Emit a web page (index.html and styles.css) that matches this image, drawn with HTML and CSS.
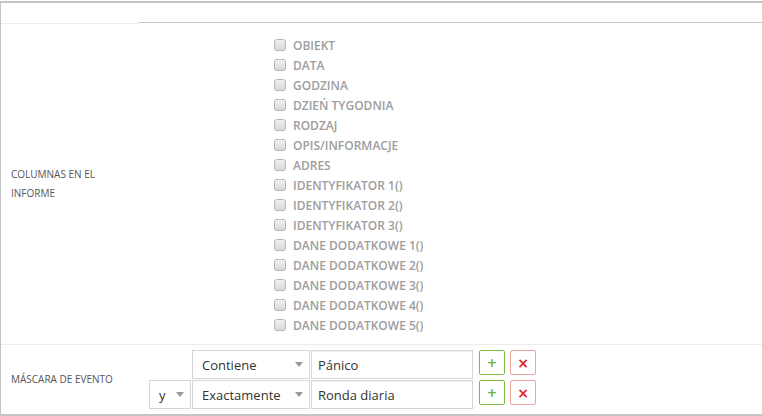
FILE: index.html
```html
<!DOCTYPE html>
<html>
<head>
<meta charset="utf-8">
<link rel="stylesheet" href="styles.css">
</head>
<body>
<div class="form">
  <div class="row row-head">
    <div class="cell-label head-label"></div>
    <div class="cell-value head-value"></div>
  </div>
  <div class="row row-columns">
    <div class="cell-label">COLUMNAS EN EL INFORME</div>
    <div class="cell-value">
      <ul class="checks">
        <li><label><input type="checkbox"><span>OBIEKT</span></label></li>
        <li><label><input type="checkbox"><span>DATA</span></label></li>
        <li><label><input type="checkbox"><span>GODZINA</span></label></li>
        <li><label><input type="checkbox"><span>DZIEŃ TYGODNIA</span></label></li>
        <li><label><input type="checkbox"><span>RODZAJ</span></label></li>
        <li><label><input type="checkbox"><span>OPIS/INFORMACJE</span></label></li>
        <li><label><input type="checkbox"><span>ADRES</span></label></li>
        <li><label><input type="checkbox"><span>IDENTYFIKATOR 1()</span></label></li>
        <li><label><input type="checkbox"><span>IDENTYFIKATOR 2()</span></label></li>
        <li><label><input type="checkbox"><span>IDENTYFIKATOR 3()</span></label></li>
        <li><label><input type="checkbox"><span>DANE DODATKOWE 1()</span></label></li>
        <li><label><input type="checkbox"><span>DANE DODATKOWE 2()</span></label></li>
        <li><label><input type="checkbox"><span>DANE DODATKOWE 3()</span></label></li>
        <li><label><input type="checkbox"><span>DANE DODATKOWE 4()</span></label></li>
        <li><label><input type="checkbox"><span>DANE DODATKOWE 5()</span></label></li>
      </ul>
    </div>
  </div>
  <div class="row row-mask">
    <div class="cell-label">MÁSCARA DE EVENTO</div>
    <div class="cell-value">
      <div class="mask-lines">
        <div class="mask-line">
          <div class="spacer"></div>
          <div class="select sel-op"><span>Contiene</span><i class="caret"></i></div>
          <div class="text-input">Pánico</div>
          <button class="btn btn-add">+</button>
          <button class="btn btn-del">×</button>
        </div>
        <div class="mask-line">
          <div class="select sel-join"><span>y</span><i class="caret"></i></div>
          <div class="select sel-op"><span>Exactamente</span><i class="caret"></i></div>
          <div class="text-input">Ronda diaria</div>
          <button class="btn btn-add">+</button>
          <button class="btn btn-del">×</button>
        </div>
      </div>
    </div>
  </div>
</div>
</body>
</html>
```
FILE: styles.css
```css
html, body {
  margin: 0;
  padding: 0;
  background: #fff;
  font-family: "Open Sans", "Liberation Sans", sans-serif;
}
.form {
  margin-top: 1px;
  border-top: 2px solid #c4c4c4;
  border-bottom: 2px solid #c4c4c4;
  border-left: 1px solid #c4c4c4;
}
.row {
  display: flex;
}
.cell-label {
  width: 128px;
  flex: none;
  padding-left: 10px;
  font-size: 10px;
  line-height: 19px;
  color: #555;
}
.cell-value {
  flex: 1;
}
.row-head {
  align-items: flex-start;
}
.head-label {
  height: 20px;
  border-bottom: 1px solid #ececec;
}
.head-value {
  height: 19px;
  border-bottom: 1px solid #c6c6c6;
}
.row-columns {
  align-items: center;
  border-bottom: 1px solid #ececec;
}
.checks {
  list-style: none;
  margin: 0;
  padding: 11px 0 9px 135px;
}
.checks li {
  height: 20px;
  display: flex;
  align-items: center;
}
.checks label {
  display: flex;
  align-items: center;
  font-size: 12px;
  font-weight: 600;
  color: #9d9d9d;
}
.checks input {
  appearance: none;
  -webkit-appearance: none;
  width: 12px;
  height: 12px;
  margin: 0 7px 0 0;
  border: 1px solid #b5b5b5;
  border-radius: 3px;
  background: linear-gradient(#f2f2f2, #d8d8d8);
  box-sizing: border-box;
}
.row-mask {
  align-items: center;
}
.mask-lines {
  padding: 5px 0 5px 10px;
  display: flex;
  flex-direction: column;
  gap: 1px;
}
.mask-line {
  display: flex;
  align-items: flex-start;
  gap: 1px;
}
.spacer, .sel-join {
  width: 42px;
  flex: none;
}
.select, .text-input {
  height: 29px;
  box-sizing: border-box;
  border: 1px solid #d6d6d6;
  font-size: 13px;
  color: #333;
  display: flex;
  align-items: center;
}
.select {
  justify-content: space-between;
  padding: 0 6px 0 9px;
}
.sel-op {
  width: 118px;
}
.text-input {
  width: 162px;
  padding-left: 6px;
  box-shadow: inset 0 1px 1px rgba(0,0,0,0.06);
}
.caret {
  width: 0;
  height: 0;
  border-left: 4px solid transparent;
  border-right: 4px solid transparent;
  border-top: 5px solid #999;
}
.btn {
  width: 26px;
  height: 25px;
  margin-left: 4px;
  padding: 0;
  background: #fff;
  border-radius: 2px;
  font-family: "DejaVu Sans", sans-serif;
  font-weight: bold;
  font-size: 13px;
  line-height: 1;
  display: flex;
  align-items: center;
  justify-content: center;
}
.btn-add {
  margin-left: 5px;
  border: 1px solid #7cbb46;
  color: #6cb33a;
}
.btn-del {
  border: 1px solid #eba3a3;
  color: #e02d2d;
  font-size: 14px;
}
```
